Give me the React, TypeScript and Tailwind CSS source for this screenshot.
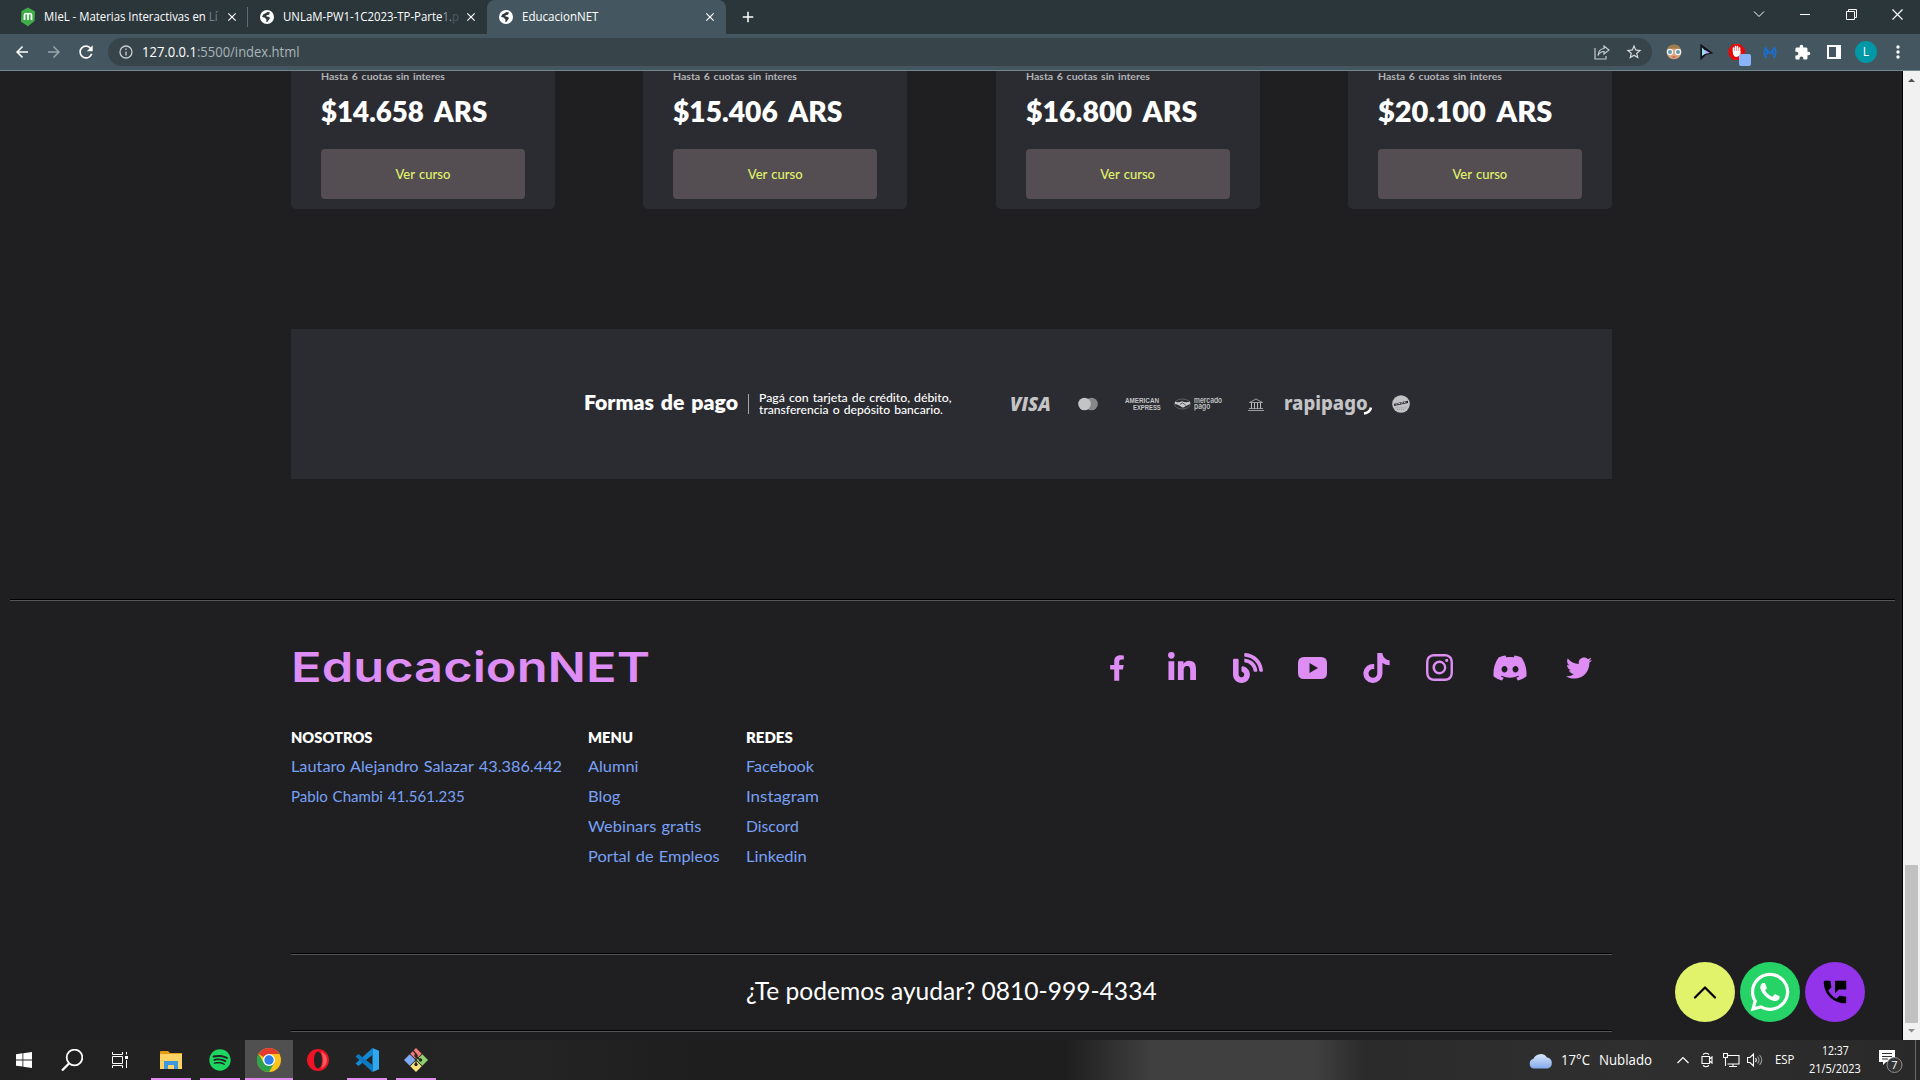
import { useLayoutEffect, useRef, useState, type ReactNode } from "react";
import { FaFacebookF, FaLinkedinIn, FaBlog, FaTiktok, FaDiscord, FaTwitter, FaWhatsapp, FaSpotify } from "react-icons/fa";
import { BsInstagram } from "react-icons/bs";
import { MdArrowBack, MdArrowForward, MdRefresh, MdExtension, MdClose, MdAdd, MdPermPhoneMsg, MdStarBorder } from "react-icons/md";

/* A line of text stretched or condensed horizontally to an exact width. */
function Fit({ w, children, className = "" }: { w: number; children: ReactNode; className?: string }) {
  const ref = useRef<HTMLSpanElement>(null);
  const [scale, setScale] = useState(1);
  useLayoutEffect(() => {
    if (ref.current) setScale(w / ref.current.offsetWidth);
  }, [w]);
  return (
    <span className={`block shrink-0 whitespace-nowrap ${className}`} style={{ width: w }}>
      <span ref={ref} className="inline-block origin-left" style={{ transform: `scaleX(${scale})` }}>
        {children}
      </span>
    </span>
  );
}

function Cell({ w, children, className = "" }: { w: number; children?: ReactNode; className?: string }) {
  return (
    <div className={`flex h-full shrink-0 items-center justify-center ${className}`} style={{ width: w }}>
      {children}
    </div>
  );
}

const Globe = () => (
  <span className="flex size-[14px] shrink-0 items-center justify-center rounded-full bg-white">
    <svg width="14" height="14" viewBox="0 0 14 14" fill="#2c3a40">
      <path d="M7.500 2 10 2.600 9 4.800 6.500 5.200 6.500 6.500 9.300 7 9.800 8.600 7.500 11.800 6.300 12.200 6.500 9.500 4.500 7.500 2 7 3.200 4.500 5.500 3.200Z" />
    </svg>
  </span>
);

function BrowserTabs() {
  return (
    <div className="flex h-[34px] items-center bg-[#2b363b] text-[12px] text-white">
      <div className="flex h-full w-[247px] items-center pl-[20px]">
        <span className="mr-2 flex size-[16px] items-center justify-center">
          <svg width="16" height="24" viewBox="0 0 16 24">
            <path d="M8 0.500 15 5.500 14.500 17 8 23.500 1 18 1.500 5Z" fill="#3fae49" transform="translate(0 2) scale(1 .82)" />
            <path d="M4.500 15v-5q0-1.500 1.700-1.500T8 10v5m0-5q0-1.500 1.700-1.500T11.500 10v5" fill="none" stroke="#fff" strokeWidth="1.700" />
          </svg>
        </span>
        <Fit w={174}>MIeL - Materias Interactivas en <span className="text-[#76848a]">Lí</span></Fit>
        <MdClose className="ml-[7px] size-[14px]" />
      </div>
      <div className="h-[20px] w-px bg-[#5f6b70]" />
      <div className="flex h-full w-[239px] items-center pl-[12px]">
        <Globe />
        <Fit w={176} className="ml-[9px]">UNLaM-PW1-1C2023-TP-Parte<span className="text-[#8b979c]">1.</span><span className="text-[#4c5a60]">p</span></Fit>
        <MdClose className="ml-[5px] size-[14px]" />
      </div>
      <div className="flex h-full w-[239px] items-center rounded-t-lg bg-[#445760] pl-[12px]">
        <Globe />
        <Fit w={76} className="ml-[9px]">EducacionNET</Fit>
        <MdClose className="ml-[105px] size-[14px]" />
      </div>
      <MdAdd className="ml-[13px] size-[18px]" />
      <div className="ml-auto flex h-full items-start pt-[2px]">
        <div className="flex h-6 items-center">
          <Cell w={46}><svg width="12" height="8" fill="none" stroke="#fff"><path d="M1 1.500 6 6.500 11 1.500" /></svg></Cell>
          <Cell w={46}><div className="h-px w-[10px] bg-white" /></Cell>
          <Cell w={46}><svg width="11" height="11" fill="none" stroke="#fff"><path d="M.5 2.500h8v8h-8zM2.500 2V.5h8v8H9" /></svg></Cell>
          <Cell w={46}><svg width="11" height="11" fill="none" stroke="#fff" strokeWidth="1.200"><path d="M.5.5 10.500 10.500M10.500.5.5 10.500" /></svg></Cell>
        </div>
      </div>
    </div>
  );
}

function Toolbar() {
  return (
    <div className="flex h-[37px] items-center border-b border-[#718a91] bg-[#445760] text-white">
      <Cell w={22} className="ml-[11px]"><MdArrowBack className="size-[18px]" /></Cell>
      <Cell w={22} className="ml-[10px] text-[#98a5aa]"><MdArrowForward className="size-[18px]" /></Cell>
      <Cell w={22} className="ml-[10px]"><MdRefresh className="size-[20px]" /></Cell>
      <div className="ml-[11px] flex h-[28px] w-[1544px] items-center rounded-full bg-[#37444a] pl-[11px] text-[14px]">
        <svg width="14" height="14" fill="none" stroke="#c7cdd0" strokeWidth="1.300"><circle cx="7" cy="7" r="6" /><path d="M7 6.500v4M7 3.500v1.500" /></svg>
        <Fit w={158} className="mt-[-1px] ml-[9px]">127.0.0.1<span className="text-[#a9b4b8]">:5500/index.html</span></Fit>
        <div className="ml-auto flex h-full">
          <Cell w={32}>
            <svg width="16" height="15" viewBox="0 0 16 15" fill="none" stroke="#c3cacd" strokeWidth="1.200"><path d="M1 3v11h11v-3M10 1l5 4-5 4V6.500q-4 0-6 4Q4.500 4 10 3.500Z" /></svg>
          </Cell>
          <Cell w={32} className="mr-[2px]"><MdStarBorder className="size-[18px] text-[#d5dadc]" /></Cell>
        </div>
      </div>
      <Cell w={32} className="ml-[6px]">
        <svg width="16" height="16" viewBox="0 0 16 16">
          <circle cx="8" cy="8" r="7.300" fill="#dca078" /><path d="M.8 6Q2 .8 8 .5 14 .8 15.200 6 8 3 .8 6Z" fill="#a07c4e" />
          <circle cx="4" cy="8" r="2.600" fill="#5f97a3" stroke="#f0f4f4" strokeWidth="1.300" /><circle cx="12" cy="8" r="2.600" fill="#5f97a3" stroke="#f0f4f4" strokeWidth="1.300" />
          <path d="M6.500 13h3" stroke="#b44" />
        </svg>
      </Cell>
      <Cell w={32}>
        <svg width="14" height="16" viewBox="0 0 14 16"><path d="M2 1 13 9 7 10 2 15Z" fill="#15161c" stroke="#15161c" strokeWidth="1.300" /><path d="M3 3.500 8 8.500 3 12Z" fill="#8fe0f5" /><path d="M6 6 11 9 6 9.800Z" fill="#c9a0fa" /></svg>
      </Cell>
      <Cell w={32}>
        <svg width="24" height="24" viewBox="0 0 24 24" className="mt-[5px] ml-[4px]">
          <path d="M5 1h7l5 5v6l-5 5H5L.5 12V6Z" fill="#e60a0a" />
          <path d="M5.500 9V5M7.500 9V3.500M9.500 9V3.500M11.500 9V5" stroke="#fff" strokeWidth="1.600" strokeLinecap="round" /><path d="M5 8h7.500v3Q11 14 8.500 14 6 14 5 11Z" fill="#fff" />
          <rect x="11" y="11" width="12" height="12" rx="2" fill="#8ab4f8" />
        </svg>
      </Cell>
      <Cell w={32}>
        <svg width="14" height="13" viewBox="0 0 14 13" fill="none" stroke="#1b6fd0" strokeWidth="1.700"><path d="M3.500 12Q-.5 8 2.500 2L7 7.500 11.500 2Q14.500 8 10.500 12M4 5v4M10 5v4" /></svg>
      </Cell>
      <Cell w={32}><MdExtension className="size-[17px]" /></Cell>
      <Cell w={32}><div className="h-[14px] w-[14px] border-2 border-r-[5px] border-white" /></Cell>
      <Cell w={32}><span className="flex size-[22px] items-center justify-center rounded-full bg-[#0097a7] text-[12px]">L</span></Cell>
      <Cell w={32}><svg width="4" height="14" fill="#fff"><circle cx="2" cy="2" r="1.700" /><circle cx="2" cy="7" r="1.700" /><circle cx="2" cy="12" r="1.700" /></svg></Cell>
    </div>
  );
}

const courses = [
  { price: "$14.658 ARS", w: 166 },
  { price: "$15.406 ARS", w: 169 },
  { price: "$16.800 ARS", w: 171 },
  { price: "$20.100 ARS", w: 174 },
];

function CourseCard({ price, w }: { price: string; w: number }) {
  return (
    <div className="h-[138px] w-[264px] rounded-b-[5px] bg-[#2b2c31] px-[30px]">
      <Fit w={124} className="h-[12px] text-[9.500px] leading-[12px] font-bold text-[#b3b3b6] [word-spacing:1px]">Hasta 6 cuotas sin interes</Fit>
      <Fit w={w} className="mt-[11px] h-[35px] text-[29px] leading-[34px] font-extrabold text-white [word-spacing:5px]">{price}</Fit>
      <div className="mt-[20px] flex h-[50px] items-center justify-center rounded-[4px] bg-[#544e53] pt-px">
        <Fit w={55} className="text-[13px] font-medium text-[#e1f36b] [word-spacing:1px]">Ver curso</Fit>
      </div>
    </div>
  );
}

function Payments() {
  return (
    <div className="mt-[120px] flex h-[150px] items-center bg-[#2b2c31] pl-[293px] text-[#c4c4c6]">
      <Fit w={154} className="mt-[-4px] text-[20.500px] leading-6 font-extrabold text-white [word-spacing:2px]">Formas de pago</Fit>
      <div className="mx-[10px] h-[20px] w-px bg-[#a5a5a8]" />
      <div className="mt-[-1px] text-[12px] leading-[12px] font-medium text-white [word-spacing:1px]">
        <Fit w={193}>Pagá con tarjeta de crédito, débito,</Fit>
        <Fit w={184}>transferencia o depósito bancario.</Fit>
      </div>
      <Fit w={41} className="ml-[58px] font-['Open_Sans'] text-[19px] font-extrabold italic">VISA</Fit>
      <svg className="ml-[27px]" width="20" height="14"><circle cx="13.500" cy="7" r="6.300" fill="#88888b" /><circle cx="6.500" cy="7" r="6.300" fill="#c4c4c6" /></svg>
      <div className="ml-[27px] w-[36px] font-['Liberation_Sans'] text-[6.500px] leading-[7px] font-bold">
        <Fit w={34}>AMERICAN</Fit>
        <Fit w={28} className="ml-[8px]">EXPRESS</Fit>
      </div>
      <svg className="ml-[13px]" width="17" height="12" viewBox="0 0 17 12"><ellipse cx="8.500" cy="6" rx="8" ry="5" fill="none" stroke="#737377" strokeWidth=".7" /><path d="M1 3.500Q4 5 8 3.200 12 5 16 3.500V6Q12 8 10 9.200 8 10 6 8 3 6 1 6Z" fill="#c9c9cb" /><path d="M6 6.500 8.500 4.800 12 7.500" fill="none" stroke="#2b2b31" strokeWidth=".7" /></svg>
      <div className="mt-[-1px] ml-[3px] w-[28px] font-['Inter'] text-[7.500px] leading-[6px] font-semibold">
        <Fit w={28}>mercado</Fit>
        <Fit w={16}>pago</Fit>
      </div>
      <svg className="ml-[26px]" width="16" height="13" viewBox="0 0 16 13" fill="none" stroke="#b9b9bb"><path d="M1.500 4.500 8 1l6.500 3.500ZM1 10.500h14M0 12.500h16" strokeWidth=".8" /><path d="M3.500 5v5.500M6.500 5v5.500M9.500 5v5.500M12.500 5v5.500" /></svg>
      <Fit w={84} className="mt-[-3px] ml-[20px] font-['Noto_Sans'] text-[19px] leading-6 font-extrabold">rapipago</Fit>
      <svg className="mt-[13px] ml-[-5px]" width="9" height="8" fill="none" stroke="#fff" strokeWidth="2.500"><path d="M8 .5Q7 5.500 1 6.500" /></svg>
      <svg className="ml-[20px]" width="18" height="18" viewBox="0 0 18 18"><circle cx="9" cy="9" r="8.800" fill="#c2c2c4" /><path d="M2 8.700 16 5.700V8L2 11Z" fill="#2b2b31" /><path d="M3.500 9.300 14.500 7" stroke="#c2c2c4" strokeDasharray="2 .8" /><path d="M3.500 12.800h11M5 14.500h8" stroke="#85858a" strokeWidth=".7" strokeDasharray="1 1" /></svg>
    </div>
  );
}

const columns = [
  { width: 297, title: "NOSOTROS", tw: 81, links: [["Lautaro Alejandro Salazar 43.386.442", 271], ["Pablo Chambi 41.561.235", 174]] },
  { width: 158, title: "MENU", tw: 45, links: [["Alumni", 50], ["Blog", 32], ["Webinars gratis", 113], ["Portal de Empleos", 132]] },
  { width: 158, title: "REDES", tw: 47, links: [["Facebook", 68], ["Instagram", 73], ["Discord", 53], ["Linkedin", 61]] },
] as { width: number; title: string; tw: number; links: [string, number][] }[];

const Rule = () => <div className="h-[2px] border-t border-b border-t-black border-b-[#555558]" />;

function Footer() {
  return (
    <div className="pr-[290px] pl-[291px]">
      <div className="mt-[26px] flex h-[80px] items-center text-[#dd8df3]">
        <Fit w={359} className="font-['Inter'] text-[41px] leading-[50px] font-semibold">EducacionNET</Fit>
        <div className="mt-px ml-auto flex items-center pr-[20px]">
          <FaFacebookF className="h-[26px] w-[16px]" />
          <FaLinkedinIn className="ml-[41px] size-[32px]" />
          <FaBlog className="ml-[35px] size-[30px]" />
          <svg className="ml-[35px]" width="29" height="22" viewBox="0 0 29 22"><path fillRule="evenodd" fill="currentColor" d="M6 0h17q6 0 6 6v10q0 6-6 6H6q-6 0-6-6V6Q0 0 6 0Zm5.500 6v10l8.500-5Z" /></svg>
          <FaTiktok className="ml-[36px] h-[30px] w-[27px]" />
          <BsInstagram className="ml-[36px] size-[27px]" />
          <FaDiscord className="ml-[39px] size-[36px]" />
          <FaTwitter className="ml-[38px] size-[26px]" />
        </div>
      </div>
      <div className="flex h-[246px]">
        {columns.map((c) => (
          <div key={c.title} style={{ width: c.width }}>
            <Fit w={c.tw} className="mt-[15px] h-[29px] text-[15px] leading-[30px] font-extrabold text-white">{c.title}</Fit>
            {c.links.map(([label, w]) => (
              <Fit key={label} w={w} className="h-[30px] text-[16px] leading-[30px] text-[#78a1f7] [word-spacing:1px]">{label}</Fit>
            ))}
          </div>
        ))}
      </div>
      <Rule />
      <div className="flex h-[75px] items-center justify-center pb-[5px]">
        <Fit w={411} className="text-[25px] leading-8 text-white">¿Te podemos ayudar? 0810-999-4334</Fit>
      </div>
      <Rule />
    </div>
  );
}

function FloatingButtons() {
  return (
    <div className="absolute right-[37px] bottom-[18px] flex gap-[5px]">
      <div className="flex size-[60px] items-center justify-center rounded-full bg-[#e1f36b]">
        <svg width="24" height="14" fill="none" stroke="#000" strokeWidth="2.200" strokeLinecap="round" strokeLinejoin="round"><path d="M2 12.500 12 2.500 22 12.500" /></svg>
      </div>
      <div className="flex size-[60px] items-center justify-center rounded-full bg-[#25d366] text-white"><FaWhatsapp className="size-[44px]" /></div>
      <div className="flex size-[60px] items-center justify-center rounded-full bg-[#9333ea] text-black"><MdPermPhoneMsg className="size-[30px]" /></div>
    </div>
  );
}

function Scrollbar() {
  return (
    <div className="flex w-[17px] flex-col items-center bg-[#f1f1f1]">
      <svg width="17" height="17" fill="#505050"><path d="M5 11h7L8.500 7.500Z" /></svg>
      <div className="mt-[777px] h-[158px] w-[13px] bg-[#c1c1c1]" />
      <svg className="mt-auto" width="17" height="17" fill="#8b8b8b"><path d="M5 6h7L8.500 9.500Z" /></svg>
    </div>
  );
}

const Task = ({ w, line = 0, active = false, children }: { w: number; line?: number; active?: boolean; children: ReactNode }) => (
  <div className={`flex h-full flex-col items-center ${active ? "bg-[#505050]" : ""}`} style={{ width: w }}>
    <div className="flex h-[38px] items-center justify-center pt-[2px]">{children}</div>
    {line > 0 && <div className="h-[2px] bg-[#e28bf0]" style={{ width: line }} />}
  </div>
);

function Taskbar() {
  return (
    <div className="flex h-[40px] bg-[linear-gradient(90deg,#212121_0%,#242424_28%,#1e1e1e_36%,#1e1e1e_55.500%,#404040_60%,#404040_68.500%,#2b2b2b_71%,#2f2f2f_85%,#292929_100%)] text-white">
      <Task w={48}><svg width="16" height="16" fill="#fff"><path d="M0 2.200 6.500 1.300V7.500H0ZM7.300 1.200 16 0V7.500H7.300ZM0 8.400H6.500V14.600L0 13.700ZM7.300 8.400H16V16L7.300 14.700Z" /></svg></Task>
      <Task w={48}><svg width="22" height="22" fill="none" stroke="#fff" strokeWidth="1.800"><circle cx="13.500" cy="8.500" r="7.800" /><path d="M8 14.500 1 21.500" strokeWidth="2.300" /></svg></Task>
      <Task w={48}><svg width="16" height="16" fill="none" stroke="#fff"><path d="M.5 0v2.500h10V0M.5 4.500h10v7H.5zM.5 16v-2.500h10V16M14.500 0v2.500M14.500 8v8" /><path d="M13 4h3v3h-3z" fill="#fff" stroke="none" /></svg></Task>
      <Task w={54} line={40}>
        <svg width="22" height="18"><path d="M0 1Q0 0 1 0h7l2 2h12v6H0Z" fill="#e39a14" /><path d="M0 3h22v15H0Z" fill="#fdd365" /><path d="M4 10h14v8h-4v-4H8v4H4Z" fill="#3f97dc" /></svg>
      </Task>
      <Task w={44} line={40}><FaSpotify className="size-[22px] text-[#1ed760]" /></Task>
      <div className="w-[3px]" />
      <Task w={48} line={48} active>
        <svg width="24" height="24" viewBox="0 0 24 24">
          <circle cx="12" cy="12" r="12" fill="#fdc31b" />
          <path d="M12 12 1.600 6A12 12 0 0 1 22.400 6H12Z" fill="#e33b2e" /><path d="M12 12 6.800 15 1.600 6A12 12 0 0 0 12 24L17.200 15Z" fill="#2ba24c" />
          <circle cx="12" cy="12" r="6" fill="#fff" /><circle cx="12" cy="12" r="4.700" fill="#2b7de9" />
        </svg>
      </Task>
      <Task w={50}>
        <svg width="22" height="22" viewBox="0 0 22 22"><path fillRule="evenodd" d="M11 0a11 11 0 1 0 0 22 11 11 0 1 0 0-22Zm0 2.500c2.500 0 4 3.800 4 8.500s-1.500 8.500-4 8.500-4-3.800-4-8.500 1.500-8.500 4-8.500Z" fill="#ee1325" /><path d="M14 2.500Q20 5 20 11t-6 8.500Q16 16 16 11T14 2.500Z" fill="#f4585d" /></svg>
      </Task>
      <Task w={48} line={40}>
        <svg width="24" height="24" viewBox="0 0 24 24"><path d="M17.500 0 24 2.800V21.200L17.500 24Z" fill="#2fa8ef" /><path d="M17.500 0 18 6.500 3.500 18 .5 15.500Z" fill="#1688d0" /><path d="M17.500 24 18 17.500 3.500 6 .5 8.500Z" fill="#0f79bd" /></svg>
      </Task>
      <Task w={50} line={40}>
        <svg width="24" height="24" viewBox="0 0 24 24">
          <path d="M12 0 17.700 5.700 12 11.400 6.300 5.700Z" fill="#f27c79" /><path d="M18.300 6.300 24 12 18.300 17.700 12.600 12Z" fill="#91d06c" /><path d="M5.700 6.300 11.400 12 5.700 17.700 0 12Z" fill="#7ea9f5" /><path d="M12 12.600 17.700 18.300 12 24 6.300 18.300Z" fill="#fbe37b" />
          <path d="M9 2.500 12 6v11M12 8l4 4" fill="none" stroke="#27251f" strokeWidth="1.200" /><circle cx="12" cy="7.500" r="1.700" fill="#27251f" /><circle cx="16.500" cy="12" r="1.700" fill="#27251f" /><circle cx="12" cy="16.500" r="1.700" fill="#27251f" />
        </svg>
      </Task>
      <div className="ml-auto flex h-full items-center">
        <svg width="25" height="17" viewBox="0 0 25 17"><defs><linearGradient id="cloud" x2="0" y2="1"><stop stopColor="#d7e5fb" /><stop offset="1" stopColor="#83aaea" /></linearGradient></defs><path d="M5.500 16.500A5 5 0 0 1 5.500 6.800 7.500 7 0 0 1 19 5.500 5.600 5.600 0 0 1 19.500 16.500Z" fill="url(#cloud)" /></svg>
        <Fit w={29} className="ml-[8px] text-[14.500px]">17°C</Fit>
        <Fit w={53} className="ml-[9px] text-[14.500px]">Nublado</Fit>
        <svg className="ml-[25px]" width="12" height="8" fill="none" stroke="#fff" strokeWidth="1.200"><path d="M.5 7 6 1.500 11.500 7" /></svg>
        <svg className="ml-[12px]" width="12" height="16" fill="none" stroke="#fff" strokeWidth="1.100"><path d="M2 2.500Q5 0 8 2.500M2 13.500Q5 16 8 13.500M1 4.500h7.500v7H1zM8.500 7l2.500-2v6l-2.500-2" /></svg>
        <svg className="ml-[10px]" width="17" height="15" fill="none" stroke="#fff" strokeWidth="1.100"><path d="M5 2.500h11v8.500H4.500M.5.500h4v4h-4zM2.500 4.500V13M10 11v2.500M6 13.500h8" /></svg>
        <svg className="ml-[7px]" width="17" height="14" fill="none" stroke="#fff" strokeWidth="1.100"><path d="M.5 4.500H3l3.500-3.500v12L3 9.500H.5ZM8.500 5q1.500 2 0 4" /><path d="M10.500 3.500q3 3.500 0 7M12.500 2q4.500 5 0 10" stroke="#999" /></svg>
        <Fit w={19} className="ml-[11px] text-[12px]">ESP</Fit>
        <div className="ml-[15px] flex w-[52px] flex-col items-center text-[12px] leading-[18px]">
          <Fit w={27}>12:37</Fit>
          <Fit w={52}>21/5/2023</Fit>
        </div>
        <svg className="ml-[17px]" width="26" height="26" viewBox="0 0 26 26"><path d="M1 3h16v12H8l-3 3v-3H1Z" fill="#fff" /><path d="M4 6.500h10M4 9.500h10M4 12h6" stroke="#333" strokeWidth="1.200" /><circle cx="16.500" cy="18" r="7.500" fill="#343434" stroke="#8d8d8d" /><text x="16.500" y="22" fontSize="11" textAnchor="middle" fill="#fff">7</text></svg>
        <div className="ml-[11px] h-full w-px bg-[#6a6a6a]" />
        <div className="w-[4px]" />
      </div>
    </div>
  );
}

export default function App() {
  return (
    <div className="flex h-[1080px] w-[1920px] flex-col overflow-hidden bg-[#1f1f21] font-['Open_Sans',sans-serif]">
      <BrowserTabs />
      <Toolbar />
      <div className="flex h-[969px]">
        <div className="relative w-[1903px] overflow-hidden border-r border-black font-['Lato',sans-serif]">
          <div className="mr-[290px] ml-[291px]">
            <div className="flex justify-between">
              {courses.map((c) => <CourseCard key={c.price} {...c} />)}
            </div>
            <Payments />
          </div>
          <div className="mt-[120px] mr-[7px] ml-[10px]"><Rule /></div>
          <Footer />
          <FloatingButtons />
        </div>
        <Scrollbar />
      </div>
      <Taskbar />
    </div>
  );
}
